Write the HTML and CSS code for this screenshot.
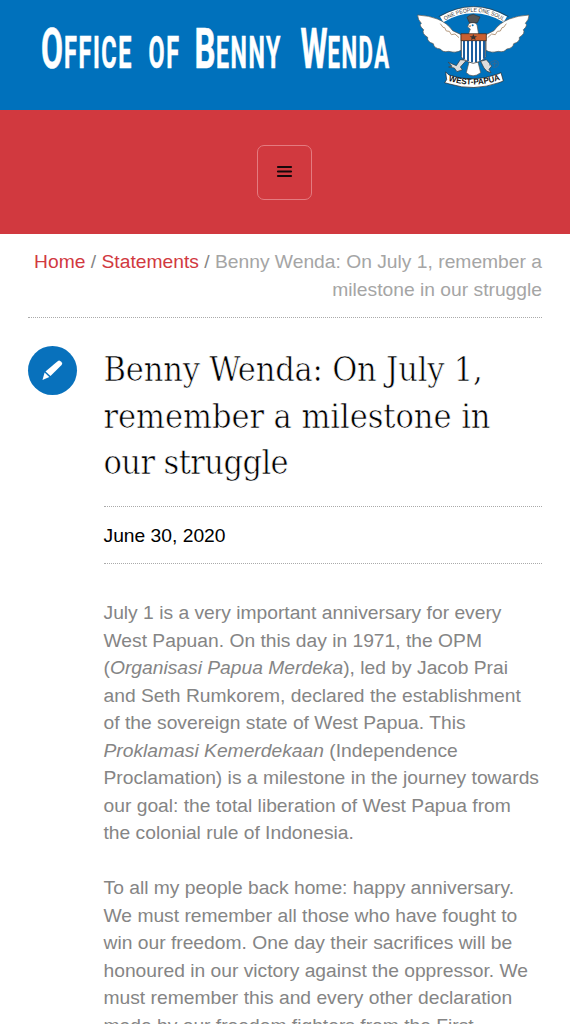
FILE: index.html
```html
<!DOCTYPE html>
<html lang="en">
<head>
<meta charset="utf-8">
<title>Benny Wenda: On July 1, remember a milestone in our struggle</title>
<link rel="stylesheet" href="styles.css">
</head>
<body>
<header class="banner">
  <svg class="wordmark" width="410" height="110" viewBox="0 0 410 110" role="img" aria-label="Office of Benny Wenda">
    <g class="caps">
      <text x="41" y="67.500" textLength="22" lengthAdjust="spacingAndGlyphs">O</text>
      <text x="194.500" y="67.500" textLength="21" lengthAdjust="spacingAndGlyphs">B</text>
      <text x="300.500" y="67.500" textLength="27" lengthAdjust="spacingAndGlyphs">W</text>
    </g>
    <g class="small-caps">
      <text x="64" y="67.500" textLength="69" lengthAdjust="spacingAndGlyphs">FFICE</text>
      <text x="148.500" y="67.500" textLength="32" lengthAdjust="spacingAndGlyphs">OF</text>
      <text x="216" y="67.500" textLength="66" lengthAdjust="spacingAndGlyphs">ENNY</text>
      <text x="327.500" y="67.500" textLength="63" lengthAdjust="spacingAndGlyphs">ENDA</text>
    </g>
  </svg>
  <svg class="emblem" width="130" height="110" viewBox="0 0 390 330" role="img" aria-label="West Papua emblem">
    <path d="M95 58Q190 2 286 58" fill="none" stroke="#fff" stroke-width="20"/>
    <path d="M86 50Q190 -10 296 50" fill="none" stroke="#333" stroke-width="2"/>
    <path id="motto-line" d="M106 62Q190 8 282 64" fill="none"/>
    <text class="motto"><textPath href="#motto-line" textLength="184" lengthAdjust="spacingAndGlyphs">ONE PEOPLE ONE SOUL</textPath></text>
    <g fill="#fff" stroke="#5c544b" stroke-width="2" stroke-linejoin="round">
      <path d="M23 45Q58 47 82 57Q112 69 128 92L153 104V151Q138 160 116 154Q98 158 91 147Q72 145 70 131Q50 125 53 112Q34 100 41 89Q25 76 34 70Q23 59 23 45Z"/>
      <path d="M357 45Q322 47 298 57Q268 69 252 92L228 104V151Q243 160 265 154Q283 158 290 147Q309 145 311 131Q331 125 328 112Q347 100 340 89Q355 76 346 70Q357 59 357 45Z"/>
      <path d="M177 186L169 218Q188 237 212 218L204 186Z"/>
      <path d="M176 72Q190 61 201 74L206 104H175L181 87L173 81Z"/>
    </g>
    <path d="M91 71l8 11 5 1 5 10 9 1 6 10 11-2 12 11M289 71l-8 11-5 1-5 10-9 1-6 10-11-2-12 11" fill="none" stroke="#b59a80" stroke-width="3"/>
    <path d="M171 52l8-6 11-3 10 4 10 4-8 17H178Z" fill="#555" stroke="#333" stroke-width="2"/>
    <circle cx="188" cy="76" r="3" fill="#0871b7"/><path d="M182 75l-7 4 7 2" fill="#bc773b"/>
    <path d="M154 121H227V170Q223 182 190 190Q158 182 154 170Z" fill="#fff" stroke="#222" stroke-width="2"/>
    <path d="M162 122V177M174 122V183M186 122V187M198 122V186M210 122V182M222 122V176" stroke="#1c5fa0" stroke-width="6"/>
    <path d="M153 101H229V122H153Z" fill="#c95f30" stroke="#352820" stroke-width="2"/>
    <path d="M190 102l3 7h8l-6 4 2 7-7-4-7 4 2-7-6-4h8Z" fill="#333"/>
    <g fill="#ddd" stroke="#333" stroke-width="2">
      <path d="M151 179l-12 18-24-10 11 12-10 2 17 3 8 11 16-6-6-8 18-20Z"/>
      <path d="M229 179l12 14 4 5-8 10 6 10-12-4-9-10-10-20Z"/>
    </g>
    <path d="M240 197q-3-10 7-13q17-6 18 6q1 13-15 12M247 191h14M254 184v15" fill="none" stroke="#356994" stroke-width="3"/>
    <path d="M107 216L117 225Q188 250 264 222L273 218L280 243L267 248Q190 275 119 252L104 248L110 239Z" fill="#fff" stroke="#222" stroke-width="2"/>
    <path id="name-line" d="M115 242Q192 267 276 238" fill="none"/>
    <text class="country"><textPath href="#name-line" textLength="159" lengthAdjust="spacingAndGlyphs">WEST-PAPUA</textPath></text>
  </svg>
</header>
<nav class="menu-bar">
  <button class="menu-button" aria-label="Menu">
    <svg width="17" height="13" viewBox="0 0 17 13"><path d="M2 2H15M2 6.500H15M2 11H15" stroke="#16080a" stroke-width="2.200" stroke-linecap="round"/></svg>
  </button>
</nav>
<main class="page">
  <div class="breadcrumbs"><a>Home</a> <span class="slash">/</span> <a>Statements</a> <span class="slash">/</span> Benny Wenda: On July 1, remember a milestone in our struggle</div>
  <article class="post">
    <div class="post-icon">
      <svg width="49" height="49" viewBox="0 0 49 49"><path d="M27.500 17L30 14.900Q31.200 14 32.500 15.200L33.800 16.600Q34.800 17.800 33.600 19L22.500 30L17.500 25.500Z" fill="#fff"/><path d="M16.600 26.500L21.300 31L14.500 34Z" fill="#fff"/></svg>
    </div>
    <div class="post-content">
      <h1><span class="line-a">Benny Wenda: On July 1,</span> <span class="line-b">remember a milestone in</span> <span class="line-c">our struggle</span></h1>
      <div class="date">June 30, 2020</div>
      <p>July 1 is a very important anniversary for every West Papuan. On this day in 1971, the OPM (<em>Organisasi Papua Merdeka</em>), led by Jacob Prai and Seth Rumkorem, declared the establishment of the sovereign state of West Papua. This <em>Proklamasi Kemerdekaan</em> (Independence Proclamation) is a milestone in the journey towards our goal: the total liberation of West Papua from the colonial rule of Indonesia.</p>
      <p>To all my people back home: happy anniversary. We must remember all those who have fought to win our freedom. One day their sacrifices will be honoured in our victory against the oppressor. We must remember this and every other declaration made by our freedom fighters from the First</p>
    </div>
  </article>
</main>
</body>
</html>
```
FILE: styles.css
```css
* { box-sizing: border-box; }
html { overflow: hidden; }
body {
  margin: 0;
  height: 1024px;
  overflow: hidden;
  background: #fff;
  color: #858585;
  font: 19.25px/27.5px "Liberation Sans", Arial, sans-serif;
}
.banner { display: flex; height: 110px; background: #0071bc; }
.wordmark, .emblem { flex: none; }
.wordmark text { fill: #fff; stroke: #fff; stroke-width: .6px; font-family: Roboto, "Liberation Sans", sans-serif; font-weight: bold; }
.caps { font-size: 56px; }
.small-caps { font-size: 44px; letter-spacing: 3px; }
.motto { font: 17px "Liberation Sans", sans-serif; fill: #333; }
.country { font: bold 25px "Liberation Sans", sans-serif; fill: #111; }
.menu-bar { display: flex; justify-content: center; align-items: center; height: 124px; background: #d1393f; }
.menu-button {
  display: flex;
  justify-content: center;
  align-items: center;
  width: 55px;
  height: 55px;
  margin-right: 1px;
  padding: 0 0 1px;
  border: 1.4px solid #e47b80;
  border-radius: 7px;
  background: transparent;
}
.page { padding: 14px 28px 0; }
.breadcrumbs { height: 70px; border-bottom: 1px dotted #aaa; color: #a5a5a5; text-align: right; }
.breadcrumbs a { color: #d1393f; }
.slash { color: #858585; }
.post { display: flex; gap: 26.500px; padding-top: 27px; }
.post-icon { flex: none; width: 49px; height: 49px; background: #0871bc; border-radius: 50%; margin-top: .5px; }
.post-content { flex: 1; min-width: 0; }
h1 {
  margin: 0;
  height: 162px;
  padding-top: 1px;
  border-bottom: 1px dotted #aaa;
  color: #000;
  font: 34px/46.700px "Roboto Slab", "DejaVu Serif Condensed", "DejaVu Serif", serif;
  font-stretch: condensed;
  -webkit-text-stroke: .6px #fff;
}
h1 span { display: block; white-space: nowrap; }
.line-a { letter-spacing: -.2px; }
.line-b { letter-spacing: -.08px; }
.line-c { letter-spacing: -.6px; }
.date { height: 57px; padding-top: 15px; border-bottom: 1px dotted #aaa; color: #000; }
p { margin: 0 0 27.500px; }
.date + p { margin-top: 35px; }
```
